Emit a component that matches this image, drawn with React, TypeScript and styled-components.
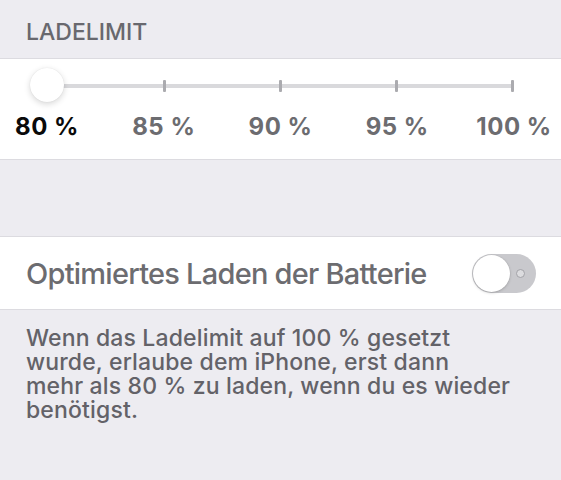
import React from "react";
import styled, { createGlobalStyle } from "styled-components";

const GlobalStyle = createGlobalStyle`
  html, body {
    margin: 0;
    padding: 0;
    background: #edecf1;
  }
  body {
    font-family: Inter, "Noto Sans", "Liberation Sans", sans-serif;
    -webkit-font-smoothing: antialiased;
  }
`;

const Page = styled.div`
  width: 561px;
  min-height: 480px;
  background: #edecf1;
  display: flex;
  flex-direction: column;
`;

const SectionHeader = styled.div`
  padding: 18px 26px 12px;
  font-size: 23px;
  font-weight: 500;
  line-height: 28px;
  color: #68686e;
  letter-spacing: 0;
`;

const Card = styled.section`
  background: #ffffff;
  border-top: 1px solid #dcdbe0;
  border-bottom: 1px solid #dcdbe0;
`;

const SliderCard = styled(Card)`
  padding: 21px 47px 18px;
  margin-bottom: 76px;
`;

const Track = styled.div`
  position: relative;
  height: 12px;
  display: flex;
  justify-content: space-between;
  align-items: center;
  background: linear-gradient(
    to bottom,
    transparent 4px,
    #d9d9dc 4px,
    #d9d9dc 8px,
    transparent 8px
  );
`;

const Tick = styled.span`
  width: 3px;
  height: 12px;
  border-radius: 1px;
  background: #ababaf;
`;

const Knob = styled.span`
  position: absolute;
  left: -17px;
  top: 50%;
  width: 34px;
  height: 34px;
  margin-top: -18px;
  border-radius: 50%;
  background: #ffffff;
  box-shadow: 0 2px 6px rgba(0, 0, 0, 0.16), 0 0 1px rgba(0, 0, 0, 0.12);
`;

const Labels = styled.div`
  display: flex;
  justify-content: space-between;
  margin-top: 21px;
`;

const LabelSlot = styled.div`
  width: 0;
  display: flex;
  justify-content: center;
`;

const StepLabel = styled.span<{ $active?: boolean }>`
  white-space: nowrap;
  font-size: 24px;
  line-height: 28px;
  font-weight: 700;
  letter-spacing: 0.5px;
  color: ${(p) => (p.$active ? "#0a0a0a" : "#6c6c70")};
`;

const ToggleRow = styled(Card)`
  height: 72px;
  padding: 0 25px 0 26px;
  display: flex;
  align-items: center;
  justify-content: space-between;
`;

const RowTitle = styled.span`
  font-size: 29px;
  font-weight: 500;
  line-height: 36px;
  padding-top: 2px;
  color: #6c6c70;
  letter-spacing: -0.75px;
`;

const Switch = styled.span`
  position: relative;
  width: 64px;
  height: 39px;
  border-radius: 20px;
  background: #c9c9cd;
  display: flex;
  align-items: center;
  justify-content: flex-end;
  padding-right: 11px;
  box-sizing: border-box;
`;

const SwitchThumb = styled.span`
  position: absolute;
  left: 1px;
  top: 1px;
  width: 37px;
  height: 37px;
  border-radius: 50%;
  background: #ffffff;
  box-shadow: 0 1px 3px rgba(0, 0, 0, 0.18), 0 0 0 0.5px rgba(0, 0, 0, 0.06);
`;

const OffMark = styled.span`
  width: 7px;
  height: 7px;
  border-radius: 50%;
  border: 1.5px solid #a3a3a8;
  background: #dcdcdf;
`;

const Footnote = styled.p`
  margin: 0;
  padding: 16px 26px 0;
  font-size: 23px;
  font-weight: 500;
  line-height: 24px;
  color: #636268;
  letter-spacing: 0.15px;
`;

const steps = [80, 85, 90, 95, 100];
const current = 80;

export default function App() {
  return (
    <Page>
      <GlobalStyle />
      <SectionHeader>LADELIMIT</SectionHeader>
      <SliderCard>
        <Track>
          {steps.map((s) => (
            <Tick key={s} />
          ))}
          <Knob />
        </Track>
        <Labels>
          {steps.map((s) => (
            <LabelSlot key={s}>
              <StepLabel $active={s === current}>{s}&nbsp;%</StepLabel>
            </LabelSlot>
          ))}
        </Labels>
      </SliderCard>
      <ToggleRow>
        <RowTitle>Optimiertes Laden der Batterie</RowTitle>
        <Switch>
          <SwitchThumb />
          <OffMark />
        </Switch>
      </ToggleRow>
      <Footnote>
        Wenn das Ladelimit auf 100&nbsp;% gesetzt
        <br />
        wurde, erlaube dem iPhone, erst dann
        <br />
        mehr als 80&nbsp;% zu laden, wenn du es wieder
        <br />
        benötigst.
      </Footnote>
    </Page>
  );
}
